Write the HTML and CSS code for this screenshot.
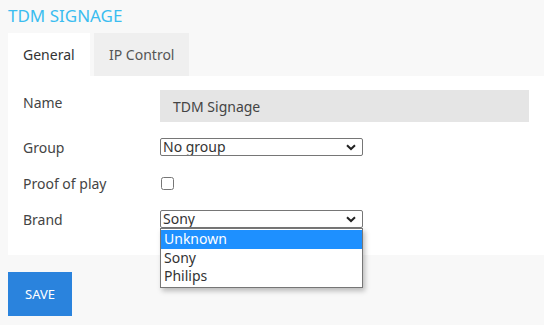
FILE: index.html
```html
<!DOCTYPE html>
<html lang="en">
<head>
    <meta charset="UTF-8">
    <meta name="viewport" content="width=device-width, initial-scale=1.0">
    <title>TDM Signage</title>
    <link rel="stylesheet" href="styles.css">
</head>
<body>
    <h1 class="title">TDM SIGNAGE</h1>
    <div class="tabs">
        <div class="tab active">General</div>
        <div class="tab">IP Control</div>
    </div>
    <section class="panel">
        <div class="row row-name">
            <label class="label">Name</label>
            <div class="name-box">TDM Signage</div>
        </div>
        <div class="row">
            <label class="label">Group</label>
            <div class="select-wrap">
                <select class="field-select">
                    <option>No group</option>
                </select>
                <svg class="chevron" width="10" height="7" viewBox="0 0 10 7"><path d="M1 1.2 L5 5 L9 1.2" fill="none" stroke="#222" stroke-width="2"/></svg>
            </div>
        </div>
        <div class="row">
            <label class="label">Proof of play</label>
            <input type="checkbox" class="check">
        </div>
        <div class="row">
            <label class="label">Brand</label>
            <div class="select-wrap">
                <select class="field-select">
                    <option>Sony</option>
                </select>
                <svg class="chevron" width="10" height="7" viewBox="0 0 10 7"><path d="M1 1.2 L5 5 L9 1.2" fill="none" stroke="#222" stroke-width="2"/></svg>
                <ul class="dropdown">
                    <li class="selected">Unknown</li>
                    <li>Sony</li>
                    <li>Philips</li>
                </ul>
            </div>
        </div>
    </section>
    <button class="save">SAVE</button>
</body>
</html>
```

FILE: styles.css
```css
*{
    box-sizing: border-box;
}
body{
    margin: 0;
    padding: 0 0 0 8px;
    background-color: #f8f8f8;
    font-family: "Noto Sans", sans-serif;
    font-size: 14px;
    color: #444;
}
.title{
    margin: 0;
    padding-top: 5px;
    height: 33px;
    font-size: 17px;
    font-weight: 400;
    color: #3bbdf0;
    line-height: 22px;
}
.tabs{
    display: flex;
    gap: 4px;
}
.tab{
    height: 43px;
    padding: 0 15px;
    line-height: 43px;
    background-color: #efefef;
    color: #555;
}
.tab.active{
    width: 82px;
    background-color: #fff;
    color: #333;
}
.panel{
    background-color: #fff;
    padding: 14px 15px 27px 15px;
    display: flex;
    flex-direction: column;
    gap: 18px;
}
.row{
    display: flex;
    align-items: center;
    height: 18px;
}
.row-name{
    height: 32px;
    align-items: flex-start;
    margin-bottom: -2px;
}
.label{
    width: 137px;
    flex-shrink: 0;
}
.row-name .label{
    padding-top: 3px;
}
.name-box{
    flex: 1;
    height: 32px;
    background-color: #e5e5e5;
    padding-left: 13px;
    line-height: 34px;
    color: #444;
}
.select-wrap{
    position: relative;
    height: 18px;
}
.field-select{
    appearance: none;
    display: block;
    width: 203px;
    height: 18px;
    margin: 0;
    padding: 0 0 0 2px;
    border: 1px solid #767676;
    border-radius: 2px;
    background-color: #fff;
    font-family: inherit;
    font-size: 14px;
    line-height: 16px;
    color: #333;
}
.chevron{
    position: absolute;
    right: 7px;
    top: 6px;
    pointer-events: none;
}
.check{
    margin: 0 0 0 1px;
    width: 13px;
    height: 13px;
}
.dropdown{
    position: absolute;
    left: 0;
    top: 18px;
    width: 203px;
    margin: 0;
    padding: 1px 0 2px 0;
    list-style: none;
    background-color: #fff;
    border: 1px solid #767676;
    box-shadow: 2px 3px 5px rgba(0, 0, 0, 0.25);
    color: #333;
    z-index: 2;
}
.dropdown li{
    height: 18px;
    line-height: 18px;
    padding-left: 3px;
}
.dropdown li.selected{
    height: 19px;
    background-color: #1e90ff;
    color: #fff;
}
.save{
    margin-top: 17px;
    width: 64px;
    height: 44px;
    border: none;
    background-color: #2a83dd;
    color: #fff;
    font-family: inherit;
    font-size: 13px;
}
```
